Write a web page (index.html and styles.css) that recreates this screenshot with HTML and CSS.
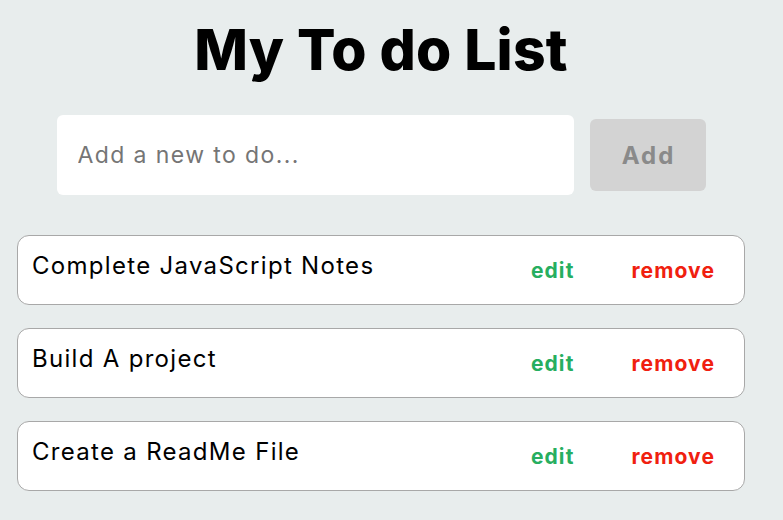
FILE: index.html
```html
<!DOCTYPE html>
<html>
<head>
<meta charset="utf-8">
<link rel="stylesheet" href="styles.css">
</head>
<body>
<div class="app">
  <h1 class="title">My To do List</h1>
  <div class="add-row">
    <input class="add-input" type="text" placeholder="Add a new to do...">
    <button class="add-btn">Add</button>
  </div>
  <ul class="list">
    <li class="item"><span class="item-text">Complete JavaScript Notes</span><span class="actions"><span class="edit">edit</span><span class="remove">remove</span></span></li>
    <li class="item"><span class="item-text">Build A project</span><span class="actions"><span class="edit">edit</span><span class="remove">remove</span></span></li>
    <li class="item"><span class="item-text">Create a ReadMe File</span><span class="actions"><span class="edit">edit</span><span class="remove">remove</span></span></li>
  </ul>
</div>
</body>
</html>
```
FILE: styles.css
```css
html, body {
  margin: 0;
  padding: 0;
  background: #e8eded;
  font-family: "Inter", "Liberation Sans", sans-serif;
}
.app {
  width: 728px;
  padding-left: 17px;
  box-sizing: content-box;
}
.title {
  margin: 0;
  padding-top: 18px;
  height: 115px;
  box-sizing: border-box;
  text-align: center;
  font-size: 57px;
  font-weight: 800;
  line-height: 64px;
  color: #000;
  letter-spacing: 0.2px;
}
.add-row {
  display: flex;
  justify-content: center;
  align-items: center;
  gap: 16px;
  height: 80px;
}
.add-input {
  width: 517px;
  height: 80px;
  box-sizing: border-box;
  border: none;
  border-radius: 6px;
  background: #fff;
  padding: 0 21px;
  font-family: inherit;
  font-size: 23px;
  letter-spacing: 1.4px;
  color: #000;
  outline: none;
}
.add-input::placeholder {
  color: #757575;
}
.add-btn {
  width: 116px;
  height: 72px;
  border: none;
  border-radius: 6px;
  background: #d3d3d3;
  color: #8a8a8a;
  font-family: inherit;
  font-size: 24px;
  font-weight: 700;
  letter-spacing: 2px;
  padding: 0 0 0 2px;
}
.list {
  list-style: none;
  margin: 40px 0 0;
  padding: 0;
  display: flex;
  flex-direction: column;
  gap: 23px;
}
.item {
  height: 70px;
  box-sizing: border-box;
  border: 1px solid #a8a8a8;
  border-radius: 12px;
  background: #fff;
  display: flex;
  align-items: center;
  padding: 0 29px 0 14px;
}
.item-text {
  flex: 1;
  font-size: 24px;
  letter-spacing: 1.3px;
  color: #000;
  margin-top: -10px;
}
.actions {
  display: flex;
  align-items: center;
  font-size: 21px;
  font-weight: 700;
  letter-spacing: 1.1px;
  margin-top: 1px;
}
.edit {
  color: #27ae60;
  margin-right: 57px;
}
.remove {
  color: #f0200f;
}
```
